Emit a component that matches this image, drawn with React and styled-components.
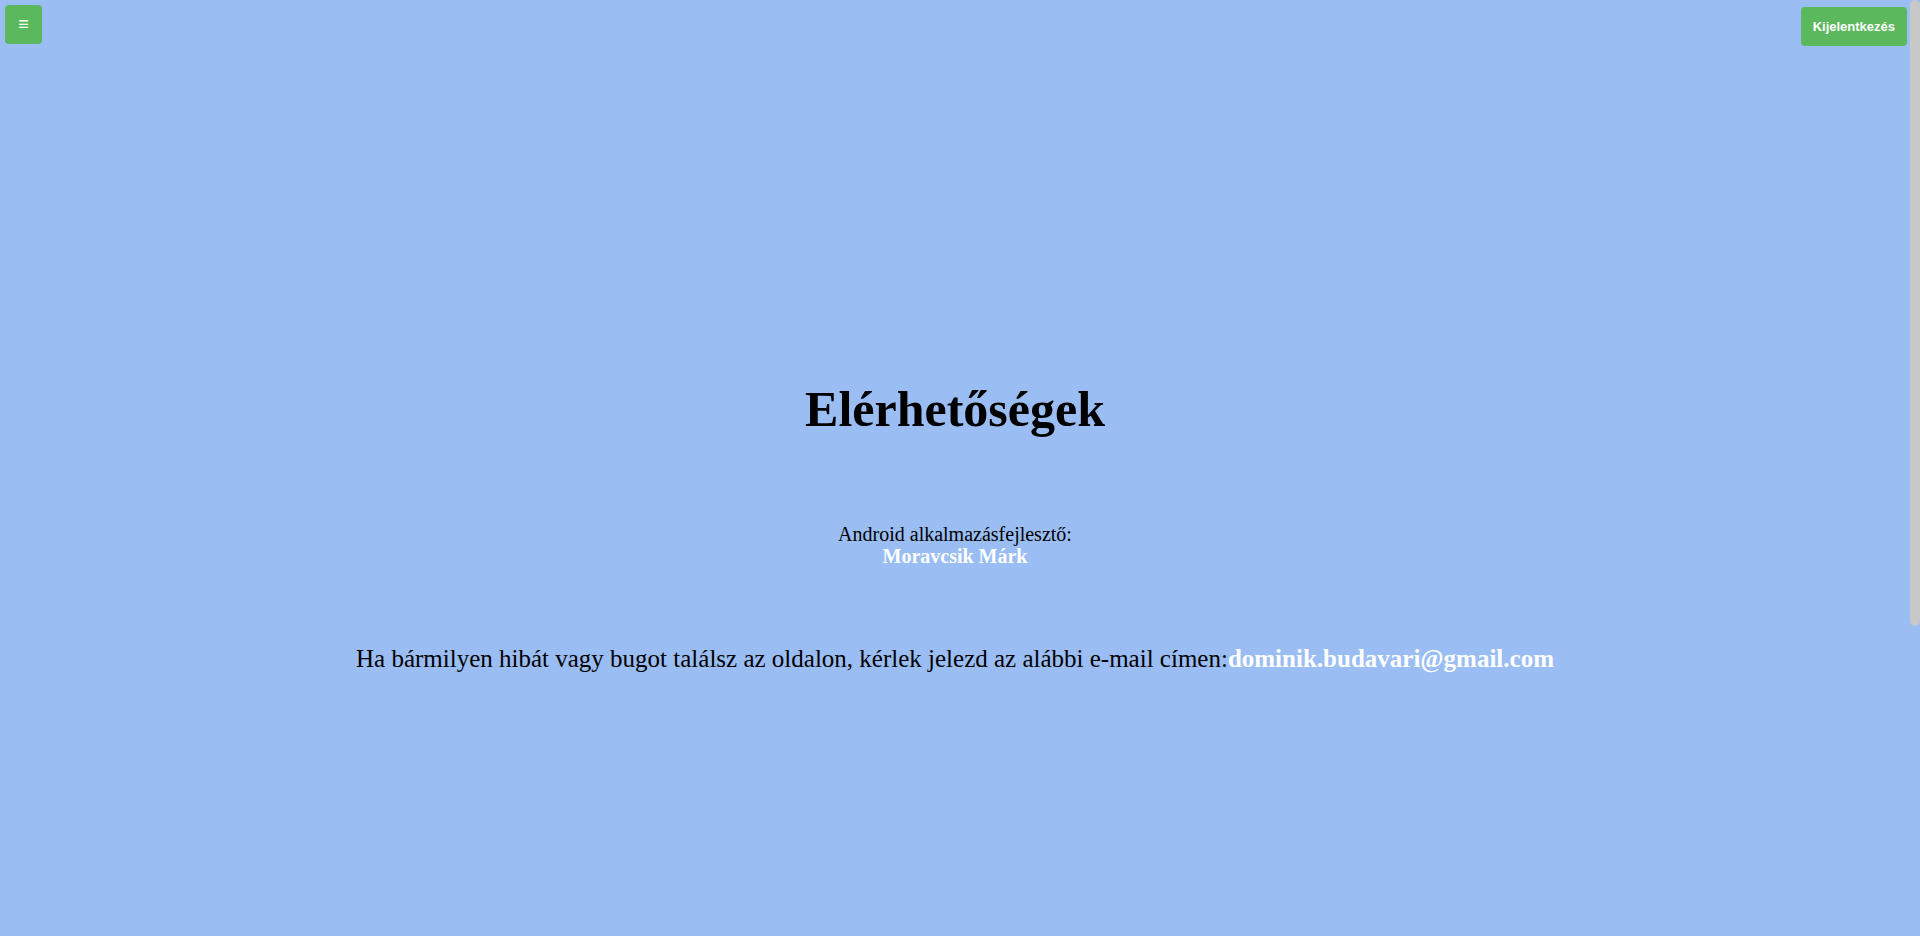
import React from "react";
import styled, { createGlobalStyle } from "styled-components";

const Global = createGlobalStyle`
  html, body { margin: 0; padding: 0; }
  body {
    background: #9abdf3;
    font-family: "Liberation Serif", "Times New Roman", serif;
    color: #000;
    overflow: hidden;
  }
`;

const Page = styled.div`
  height: 936px;
  margin-right: 10px;
`;

const TopBar = styled.header`
  display: flex;
  justify-content: space-between;
  align-items: flex-start;
  padding: 5px 3px 0 5px;
`;

const GreenButton = styled.button`
  background: #5cb85c;
  color: #fff;
  border: none;
  border-radius: 4px;
  font-family: "Liberation Sans", Arial, sans-serif;
  font-weight: bold;
  cursor: pointer;
  height: 39px;
  padding: ${(p) => (p.$icon ? "0" : "0 12px")};
  width: ${(p) => (p.$icon ? "37px" : "auto")};
  font-size: ${(p) => (p.$icon ? "18px" : "13px")};
  margin-top: ${(p) => (p.$icon ? "0" : "2px")};
`;

const Main = styled.main`
  display: flex;
  flex-direction: column;
  align-items: center;
  text-align: center;
  padding-top: 334px;
`;

const Title = styled.h1`
  font-size: 50px;
  font-weight: bold;
  margin: 0 0 85px;
`;

const Role = styled.p`
  font-size: 20px;
  margin: 0;
  line-height: 22px;
`;

const Name = styled.strong`
  display: block;
  color: #fff;
  font-size: 20px;
`;

const Report = styled.p`
  font-size: 25px;
  margin: 78px 0 0;
`;

const Email = styled.strong`
  color: #fff;
`;

const ScrollRail = styled.div`
  position: fixed;
  top: 0;
  right: 0;
  width: 10px;
  height: 100%;
`;

const ScrollThumb = styled.div`
  width: 10px;
  height: 626px;
  background: #c8c8c8;
  border-radius: 5px;
`;

export default function App() {
  return (
    <>
      <Global />
      <Page>
        <TopBar>
          <GreenButton $icon>≡</GreenButton>
          <GreenButton>Kijelentkezés</GreenButton>
        </TopBar>
        <Main>
          <Title>Elérhetőségek</Title>
          <Role>
            Android alkalmazásfejlesztő:
            <Name>Moravcsik Márk</Name>
          </Role>
          <Report>
            Ha bármilyen hibát vagy bugot találsz az oldalon, kérlek jelezd az alábbi e-mail címen:
            <Email>dominik.budavari@gmail.com</Email>
          </Report>
        </Main>
      </Page>
      <ScrollRail>
        <ScrollThumb />
      </ScrollRail>
    </>
  );
}
